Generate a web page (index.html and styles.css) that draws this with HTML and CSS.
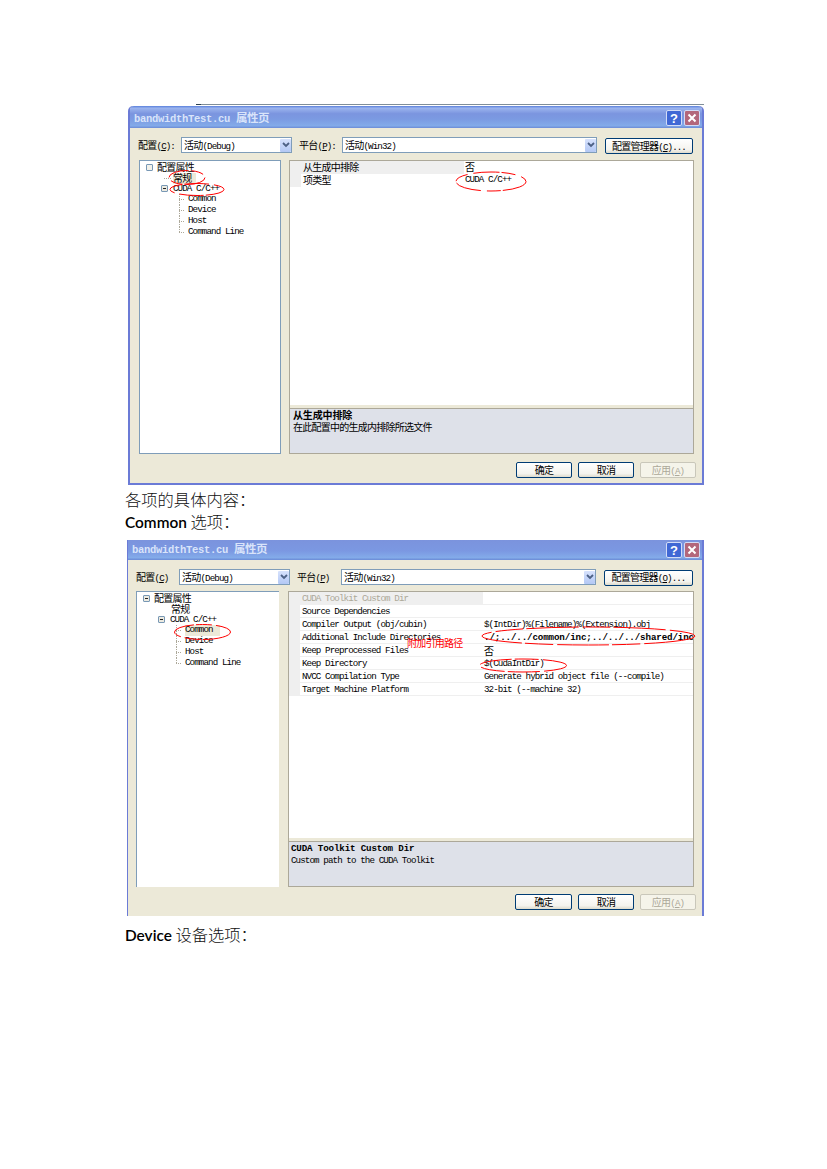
FILE: index.html
```html
<!DOCTYPE html>
<html lang="zh-CN">
<head>
<meta charset="utf-8">
<title>bandwidthTest.cu 属性页</title>
<link rel="stylesheet" href="styles.css">
</head>
<body>
<main class="page">
  <div class="topline"></div>
  <section class="dialog first">
    <header class="title"><span class="name"><b>bandwidthTest.cu</b> <span class="z">属性页</span></span><span class="help">?</span><span class="close"><svg viewBox="0 0 10 10"><path d="M1.5 1.5L8.5 8.5M8.5 1.5L1.5 8.5"/></svg></span></header>
    <div class="toolbar">
      <label><span class="z">配置</span>(<u>C</u>):</label>
      <div class="select conf"><span><span class="z">活动</span>(Debug)</span><i><svg viewBox="0 0 8 6"><path d="M1 1l3 3 3-3"/></svg></i></div>
      <label class="plat"><span class="z">平台</span>(<u>P</u>):</label>
      <div class="select wide"><span><span class="z">活动</span>(Win32)</span><i><svg viewBox="0 0 8 6"><path d="M1 1l3 3 3-3"/></svg></i></div>
      <button class="manager"><span class="z">配置管理器</span>(<u>C</u>)...</button>
    </div>
    <div class="content">
      <ul class="tree">
        <li class="l0"><i class="box"></i><span class="z">配置属性</span></li>
        <li class="l1"><span class="z sel">常规</span></li>
        <li class="l2"><i class="box minus"></i>CUDA C/C++</li>
        <li class="l3">Common</li>
        <li class="l3">Device</li>
        <li class="l3">Host</li>
        <li class="l3">Command Line</li>
      </ul>
      <div class="props">
        <div class="rows">
          <div class="row active"><i></i><span class="key z">从生成中排除</span><span class="val z">否</span></div>
          <div class="row"><i></i><span class="key z">项类型</span><span class="val">CUDA C/C++</span></div>
        </div>
        <div class="desc"><b class="z">从生成中排除</b><p class="z">在此配置中的生成内排除所选文件</p></div>
      </div>
    </div>
    <footer class="actions"><button><span class="z">确定</span></button><button><span class="z">取消</span></button><button class="off"><span class="z">应用</span>(<u>A</u>)</button></footer>
    <svg class="marks" viewBox="0 0 576 379">
      <ellipse cx="59" cy="71.500" rx="18" ry="7" stroke-dasharray="22 3 12 4"/>
      <ellipse cx="69" cy="83.500" rx="27" ry="6" stroke-dasharray="20 2 24 5"/>
      <ellipse cx="363" cy="75.500" rx="35" ry="9.500" stroke-dasharray="26 2 14 6"/>
    </svg>
  </section>
  <p class="doc p1">各项的具体内容：</p>
  <p class="doc p2"><b>Common</b> 选项：</p>
  <section class="dialog second">
    <header class="title"><span class="name"><b>bandwidthTest.cu</b> <span class="z">属性页</span></span><span class="help">?</span><span class="close"><svg viewBox="0 0 10 10"><path d="M1.5 1.5L8.5 8.5M8.5 1.5L1.5 8.5"/></svg></span></header>
    <div class="toolbar">
      <label><span class="z">配置</span>(<u>C</u>)</label>
      <div class="select conf"><span><span class="z">活动</span>(Debug)</span><i><svg viewBox="0 0 8 6"><path d="M1 1l3 3 3-3"/></svg></i></div>
      <label class="plat"><span class="z">平台</span>(<u>P</u>)</label>
      <div class="select wide"><span><span class="z">活动</span>(Win32)</span><i><svg viewBox="0 0 8 6"><path d="M1 1l3 3 3-3"/></svg></i></div>
      <button class="manager"><span class="z">配置管理器</span>(<u>O</u>)...</button>
    </div>
    <div class="content">
      <ul class="tree">
        <li class="l0"><i class="box minus"></i><span class="z">配置属性</span></li>
        <li class="l1"><span class="z">常规</span></li>
        <li class="l2"><i class="box minus"></i>CUDA C/C++</li>
        <li class="l3"><span class="sel">Common</span></li>
        <li class="l3">Device</li>
        <li class="l3">Host</li>
        <li class="l3">Command Line</li>
      </ul>
      <div class="props">
        <div class="rows lined">
          <div class="row active"><i></i><span class="key">CUDA Toolkit Custom Dir</span><span class="val"></span></div>
          <div class="row"><i></i><span class="key">Source Dependencies</span><span class="val"></span></div>
          <div class="row"><i></i><span class="key">Compiler Output (obj/cubin)</span><span class="val">$(IntDir)%(Filename)%(Extension).obj</span></div>
          <div class="row"><i></i><span class="key">Additional Include Directories</span><b class="val">./;../../common/inc;../../../shared/inc</b></div>
          <div class="row"><i></i><span class="key">Keep Preprocessed Files</span><span class="val z">否</span></div>
          <div class="row"><i></i><span class="key">Keep Directory</span><span class="val">$(CudaIntDir)</span></div>
          <div class="row"><i></i><span class="key">NVCC Compilation Type</span><span class="val">Generate hybrid object file (--compile)</span></div>
          <div class="row"><i></i><span class="key">Target Machine Platform</span><span class="val">32-bit (--machine 32)</span></div>
        </div>
        <div class="desc"><b>CUDA Toolkit Custom Dir</b><p>Custom path to the CUDA Toolkit</p></div>
      </div>
    </div>
    <footer class="actions"><button><span class="z">确定</span></button><button><span class="z">取消</span></button><button class="off"><span class="z">应用</span>(<u>A</u>)</button></footer>
    <span class="note z">附加引用路径</span>
    <svg class="marks" viewBox="0 0 577 376">
      <ellipse cx="75.500" cy="92" rx="28" ry="7.500" stroke-dasharray="30 2 16 4"/>
      <ellipse cx="461.500" cy="96" rx="106.500" ry="9" stroke-dasharray="52 4 28 3"/>
      <ellipse cx="396" cy="125.500" rx="43.500" ry="6.500" stroke-dasharray="24 4 32 3"/>
    </svg>
  </section>
  <p class="doc p3"><b>Device</b> 设备选项：</p>
</main>
</body>
</html>
```
FILE: styles.css
```css
* { box-sizing: border-box; }
body { margin: 0; background: #fff; }
p, ul { margin: 0; padding: 0; }
.page { width: 827px; height: 1169px; padding: 104px 0 0 125px; overflow: hidden; }
.topline { height: 1px; width: 508px; margin-left: 71px; background: #7f8e99; border-left: 5px solid #2b4052; }

.dialog {
  position: relative;
  display: flex;
  flex-direction: column;
  background: #ece9d8;
  font: 9.2px/11px "Liberation Mono", "Noto Sans CJK SC", monospace;
  letter-spacing: -.9px;
  color: #000;
  white-space: nowrap;
}
.z { font-family: "Noto Sans CJK SC", sans-serif; font-size: 10px; letter-spacing: -.75px; }
.first { margin: 1px 0 0 3px; width: 576px; height: 379px; border: 2px solid #6b7bd6; border-top: 0; border-radius: 5px 5px 0 0; }
.second { margin-left: 2px; width: 577px; height: 376px; border: solid #6b7bd6; border-width: 0 2px 0 1px; }

.title {
  height: 22px;
  flex: none;
  display: flex;
  align-items: center;
  gap: 2px;
  padding: 2px 2px 0 4px;
  color: #d9e4fa;
  background: linear-gradient(#5a80dc, #9bb4ee 10%, #7b95df 35%, #7b9ae2 60%, #83abe9 90%, #6a8ad6);
}
.first .title { border-radius: 4px 4px 0 0; }
.second .title { height: 20px; padding-top: 0; background: linear-gradient(#7b93dd, #7b98e2 55%, #83abe9 88%, #6a8ad6); }
.name { flex: 1; font-size: 10.5px; letter-spacing: -.3px; }
.second .name { padding-bottom: 2px; }
.name .z { font-size: 11.5px; letter-spacing: -.5px; font-weight: 700; }
.help, .close { width: 16px; height: 16px; border: 1px solid #d2dcf7; border-radius: 2px; display: flex; align-items: center; justify-content: center; }
.help { background: #4068d5; color: #fff; font: bold 13px "Liberation Sans", sans-serif; letter-spacing: 0; }
.close { background: #b3677b; }
.close svg { width: 10px; height: 10px; stroke: #fff; stroke-width: 2; }

.toolbar { display: flex; align-items: center; height: 16px; flex: none; margin-top: 9px; padding-left: 8px; }
.toolbar label { width: 43px; }
.toolbar .plat { width: 43px; margin-left: 7px; }
.second .toolbar .plat { width: 44px; }
.select { height: 16px; border: 1px solid #7f9db9; background: #fff; display: flex; align-items: center; justify-content: space-between; padding-left: 2px; }
.select i { width: 11px; height: 13px; background: linear-gradient(#d7e2fc, #b3c8f5); display: flex; align-items: center; justify-content: center; border-radius: 1px; }
.select svg { width: 8px; height: 6px; fill: none; stroke: #4d6185; stroke-width: 1.8; }
.conf { width: 111px; }
.wide { width: 255px; }
button { font: inherit; letter-spacing: inherit; color: inherit; padding: 0; height: 16px; border: 1px solid #003c74; border-radius: 2px; background: linear-gradient(#fff, #f4f3ee 75%, #dedbcd); white-space: nowrap; }
.manager { margin: 2px 0 0 8px; width: 88px; }
.second .manager { width: 89px; margin-top: 1px; }

.content { display: flex; gap: 8px; margin: 7px 8px 0 9px; height: 294px; flex: none; }
.second .content { margin: 6px 8px 0 8px; height: 296px; gap: 9px; }
.tree { width: 142px; background: #fff; border: 1px solid #7f9db9; list-style: none; padding-top: 1px; }
.second .tree { width: 143px; border-right: 0; border-bottom: 0; }
.tree li { height: 10.8px; display: flex; align-items: center; line-height: 10.8px; }
.l0 { padding-left: 6px; gap: 4px; }
.tree .l1 { padding-left: 34px; }
.first .tree .l1 { padding-left: 33px; background: repeating-linear-gradient(90deg, #aca899 0 1px, transparent 1px 2px) 24px 50% / 8px 1px no-repeat; }
.tree .l2 { padding-left: 21px; gap: 5px; }
.tree .l3 { padding-left: 48px; background: repeating-linear-gradient(#aca899 0 1px, transparent 1px 2px) 39px 0 / 1px 100% no-repeat, repeating-linear-gradient(90deg, #aca899 0 1px, transparent 1px 2px) 39px 50% / 6px 1px no-repeat; }
.tree .l3:last-child { background-size: 1px 6px, 6px 1px; }
.sel { background: #ece9d8; padding-right: 4px; }
.l3 .sel { padding-right: 7px; }
.box { width: 7px; height: 7px; border: 1px solid #7898b5; background: #f2f1ea; border-radius: 1px; }
.minus { background: linear-gradient(#222, #222) 50% 50% / 3px 1px no-repeat #eceae0; }

.props { flex: 1; min-width: 0; display: flex; flex-direction: column; border: 1px solid #aca899; background: #fff; }
.rows { flex: 1; overflow: hidden; }
.row { height: 13px; display: grid; grid-template-columns: 11px 163px 1fr; line-height: 12px; }
.lined .row { grid-template-columns: 11px 183px 1fr; line-height: 14px; }
.lined .row > * { border-bottom: 1px solid #efefef; height: 13px; }
.row i { background: #efefef; }
.row .key { padding-left: 2px; }
.row .val { padding-left: 1px; }
.row b { letter-spacing: -.13px; overflow: hidden; }
.active .key { background: #efefef; }
.lined .active .key { color: #aca899; }
.desc { height: 48px; padding: 1px 3px; border-top: 3px solid #ece9d8; background: #dee1e9; line-height: 12px; box-shadow: inset 0 1px #aca899; }
.desc b { display: block; letter-spacing: -.15px; height: 12px; }
.desc p { height: 12px; }
.second .desc { padding: 2px 2px; }

.actions { display: flex; justify-content: flex-end; gap: 6px; padding: 8px 6px 0 0; flex: none; }
.second .actions { padding-top: 7px; }
.actions button { width: 56px; }
.second .actions button:first-child { width: 57px; }
.actions .off { color: #aca899; border-color: #c9c7ba; background: #f5f4ea; }

.marks { position: absolute; left: -2px; top: 0; width: 576px; height: 379px; fill: none; stroke: #f00; stroke-width: 1; pointer-events: none; overflow: visible; }
.second .marks { left: -1px; width: 577px; height: 376px; }
.note { position: absolute; left: 279px; top: 97px; color: #f00; }

.doc { font: 300 16.3px/22px "Noto Sans CJK SC", sans-serif; height: 22px; white-space: pre; color: #111; }
.doc b { font: 600 15.4px Lato, sans-serif; color: #000; }
.p1 { margin-top: 3px; }
.p2 { margin-bottom: 8px; }
.p3 { margin-top: 7px; }
```
